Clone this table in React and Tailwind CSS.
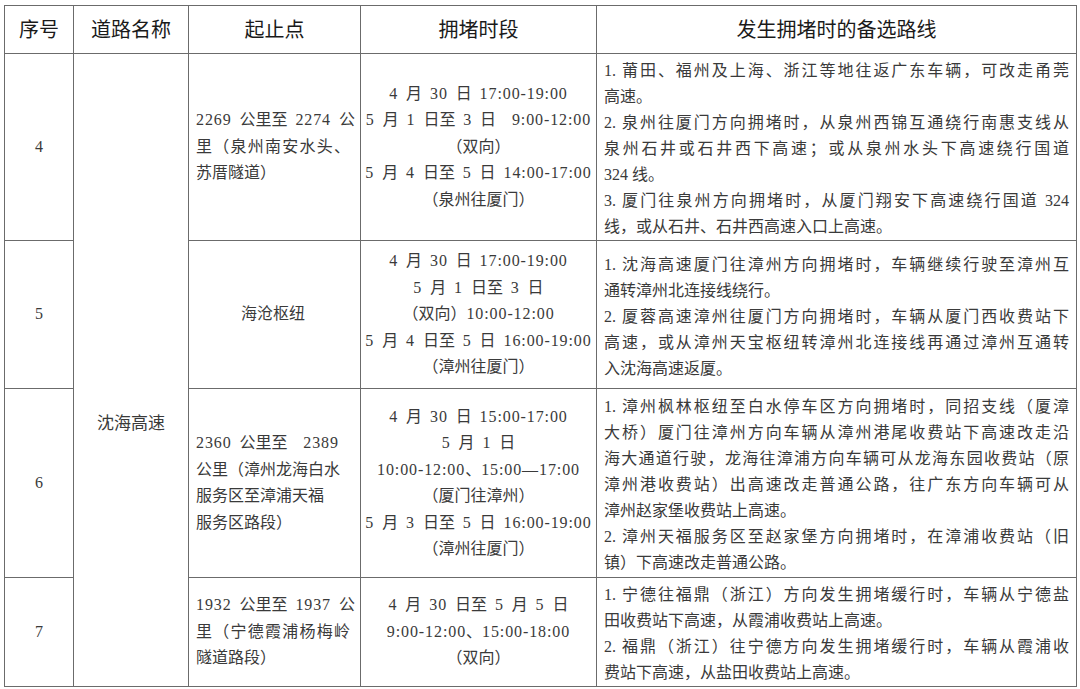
import React from 'react';

const serif = { fontFamily: '"Liberation Serif", "Noto Sans CJK SC", serif' };

const rows = [
  {
    no: '4',
    h: 'h-[187px]',
    range: ['2269 公里至 2274 公', '里（泉州南安水头、', '苏厝隧道）'],
    times: ['4 月 30 日 17:00-19:00', '5 月 1 日至 3 日  9:00-12:00', '（双向）', '5 月 4 日至 5 日 14:00-17:00', '（泉州往厦门）'],
    routes: [
      ['1. 莆田、福州及上海、浙江等地往返广东车辆，可改走甬莞', '高速。'],
      ['2. 泉州往厦门方向拥堵时，从泉州西锦互通绕行南惠支线从', '泉州石井或石井西下高速；或从泉州水头下高速绕行国道', '324 线。'],
      ['3. 厦门往泉州方向拥堵时，从厦门翔安下高速绕行国道 324', '线，或从石井、石井西高速入口上高速。'],
    ],
  },
  {
    no: '5',
    h: 'h-[148px]',
    center: true,
    range: ['海沧枢纽'],
    times: ['4 月 30 日 17:00-19:00', '5 月 1 日至 3 日', '（双向）10:00-12:00', '5 月 4 日至 5 日 16:00-19:00', '（漳州往厦门）'],
    routes: [
      ['1. 沈海高速厦门往漳州方向拥堵时，车辆继续行驶至漳州互', '通转漳州北连接线绕行。'],
      ['2. 厦蓉高速漳州往厦门方向拥堵时，车辆从厦门西收费站下', '高速，或从漳州天宝枢纽转漳州北连接线再通过漳州互通转', '入沈海高速返厦。'],
    ],
  },
  {
    no: '6',
    h: 'h-[189px]',
    range: ['2360 公里至  2389', '公里（漳州龙海白水', '服务区至漳浦天福', '服务区路段）'],
    loose: true,
    times: ['4 月 30 日 15:00-17:00', '5 月 1 日', '10:00-12:00、15:00—17:00', '（厦门往漳州）', '5 月 3 日至 5 日 16:00-19:00', '（漳州往厦门）'],
    routes: [
      ['1. 漳州枫林枢纽至白水停车区方向拥堵时，同招支线（厦漳', '大桥）厦门往漳州方向车辆从漳州港尾收费站下高速改走沿', '海大通道行驶，龙海往漳浦方向车辆可从龙海东园收费站（原', '漳州港收费站）出高速改走普通公路，往广东方向车辆可从', '漳州赵家堡收费站上高速。'],
      ['2. 漳州天福服务区至赵家堡方向拥堵时，在漳浦收费站（旧', '镇）下高速改走普通公路。'],
    ],
  },
  {
    no: '7',
    h: 'h-[108px]',
    range: ['1932 公里至 1937 公', '里（宁德霞浦杨梅岭', '隧道路段）'],
    times: ['4 月 30 日至 5 月 5 日', '9:00-12:00、15:00-18:00', '（双向）'],
    routes: [
      ['1. 宁德往福鼎（浙江）方向发生拥堵缓行时，车辆从宁德盐', '田收费站下高速，从霞浦收费站上高速。'],
      ['2. 福鼎（浙江）往宁德方向发生拥堵缓行时，车辆从霞浦收', '费站下高速，从盐田收费站上高速。'],
    ],
  },
];

const cell = 'border border-[#6b6b6b] align-middle';

// latin runs get a little extra room so they sit like the half-width digits of the original
function Mixed({ text }) {
  return text.split(/([0-9:\-— .]+)/).map((part, i) =>
    /^[0-9:\-— .]+$/.test(part) ? (
      <span key={i} className="tracking-[0.9px] [word-spacing:3px]">{part}</span>
    ) : (
      <span key={i}>{part}</span>
    )
  );
}

function Paragraph({ lines }) {
  return lines.map((line, i) => (
    <div
      key={i}
      className={i < lines.length - 1 ? 'text-justify [text-align-last:justify]' : 'text-left'}
    >
      {line}
    </div>
  ));
}

export default function App() {
  return (
    <div
      className="w-[1080px] h-[689px] bg-white pl-[4px] pt-[5px] text-[#3a3a3a] [text-spacing-trim:space-all]"
      style={serif}
      lang="zh"
    >
      <table className="table-fixed border-collapse w-[1072px] text-[16px] leading-[26.5px]">
        <colgroup>
          <col className="w-[69px]" />
          <col className="w-[115px]" />
          <col className="w-[172px]" />
          <col className="w-[236px]" />
          <col className="w-[480px]" />
        </colgroup>
        <thead>
          <tr className="h-[48px] text-[20px] text-[#1a1a1a]" style={{ fontFamily: '"Noto Sans CJK SC", sans-serif' }}>
            <th className={`${cell} font-normal`}>序号</th>
            <th className={`${cell} font-normal`}>道路名称</th>
            <th className={`${cell} font-normal`}>起止点</th>
            <th className={`${cell} font-normal`}>拥堵时段</th>
            <th className={`${cell} font-normal`}>发生拥堵时的备选路线</th>
          </tr>
        </thead>
        <tbody>
          {rows.map((r, i) => (
            <tr key={r.no} className={r.h}>
              <td className={`${cell} text-center`}>{r.no}</td>
              {i === 0 && (
                <td rowSpan={4} className="border border-[#6b6b6b] align-top text-center pt-[357px] text-[17px]">
                  沈海高速
                </td>
              )}
              <td className={`${cell} pl-[7px] pr-[10px]`}>
                {r.center ? (
                  <div className="text-center">{r.range[0]}</div>
                ) : (
                  r.range.map((l, j) => (
                    <div
                      key={j}
                      className={j < r.range.length - 1 && !r.loose ? 'whitespace-pre text-justify [text-align-last:justify]' : 'whitespace-pre text-left'}
                    >
                      <Mixed text={l} />
                    </div>
                  ))
                )}
              </td>
              <td className={`${cell} px-[4px] text-center`}>
                {r.times.map((t, j) => (
                  <div key={j} className="whitespace-pre">
                    <Mixed text={t} />
                  </div>
                ))}
              </td>
              <td className={`${cell} px-[7px] pt-[4px] leading-[26px]`}>
                {r.routes.map((p, j) => (
                  <Paragraph key={j} lines={p} />
                ))}
              </td>
            </tr>
          ))}
        </tbody>
      </table>
    </div>
  );
}
